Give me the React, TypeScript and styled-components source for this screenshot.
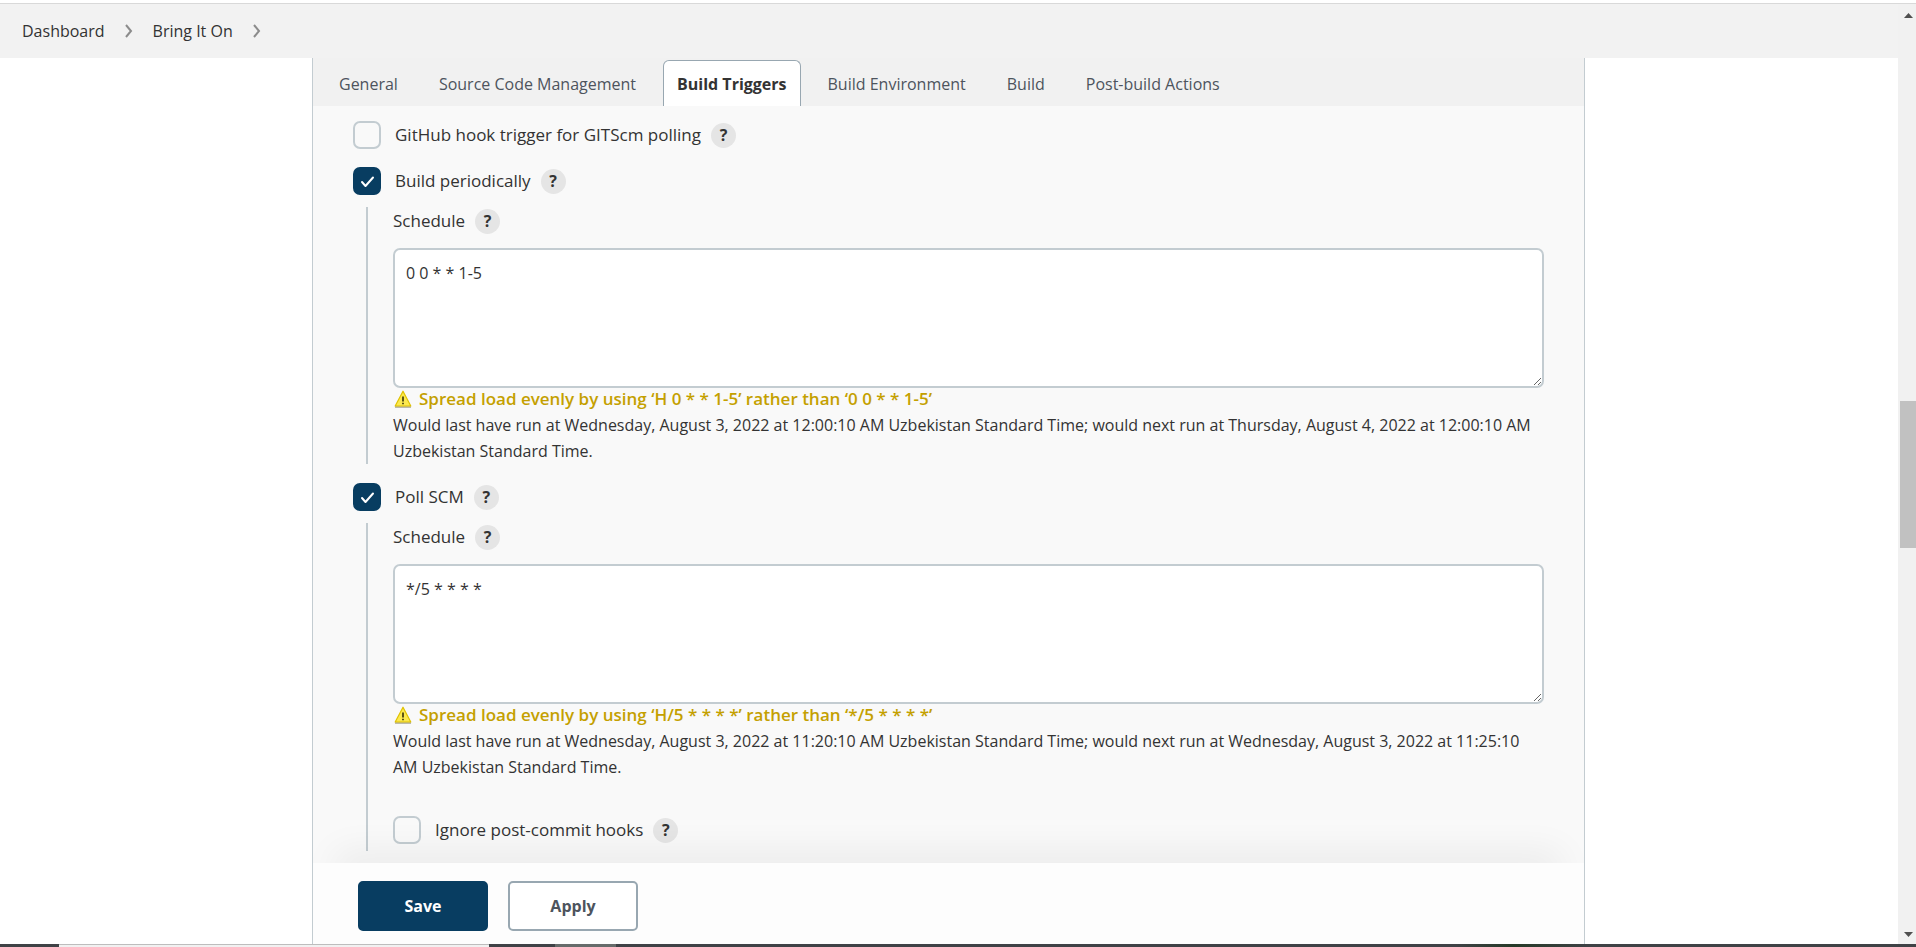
import React, { useId } from "react";
import styled, { createGlobalStyle } from "styled-components";

const font = `"Open Sans", "Noto Sans", sans-serif`;

const GlobalStyle = createGlobalStyle`
  *, *::before, *::after { box-sizing: border-box; }
  html, body, #root { height: 100%; }
  body { margin: 0; background: #fff; color: #333; font-family: ${font}; font-size: 16px; line-height: 26px; overflow: hidden; }
  button, textarea, input { font: inherit; color: inherit; }
`;

const Page = styled.div`
  display: grid;
  grid-template: auto minmax(0, 1fr) auto / minmax(0, 1fr) 18px;
  height: 100vh;
`;

const TopEdge = styled.div`
  grid-column: 1 / -1;
  height: 4px;
  border-bottom: 1px solid #d9d9d9;
`;

const Main = styled.div`
  display: flex;
  flex-direction: column;
  min-height: 0;
`;

const Breadcrumbs = styled.nav`
  display: flex;
  flex: none;
  align-items: center;
  height: 54px;
  padding: 0 22px;
  background: #f2f2f2;
`;

const Crumb = styled.a`
  color: #333;
  font-size: 16px;
  font-weight: 500;
  text-decoration: none;
`;

const CrumbArrow = styled.svg`
  flex: none;
  width: 8px;
  height: 14px;
  margin: 0 20px;
  fill: none;
  stroke: #8c8c8c;
  stroke-width: 2;
`;

const Panel = styled.main`
  display: flex;
  flex: 1;
  flex-direction: column;
  min-height: 0;
  margin: 0 313px 0 312px;
  border: solid #c3ccd1;
  border-width: 0 1px;
  background: #f9f9f9;
  overflow: hidden;
`;

const TabBar = styled.nav`
  display: flex;
  flex: none;
  align-items: flex-end;
  gap: 13px;
  height: 48px;
  padding: 0 12px;
  background: #f1f1f1;
`;

const Tab = styled.a<{ $active?: boolean }>`
  height: 46px;
  padding: 0 13px;
  border: 1px solid ${(p) => (p.$active ? "#98a7b1" : "transparent")};
  border-bottom: 0;
  border-radius: 6px 6px 0 0;
  background: ${(p) => (p.$active ? "#fff" : "transparent")};
  color: ${(p) => (p.$active ? "#333" : "#4d545d")};
  font-weight: ${(p) => (p.$active ? 700 : 400)};
  line-height: 46px;
  text-decoration: none;
  white-space: nowrap;
`;

const Form = styled.form`
  display: flex;
  flex: 1;
  flex-direction: column;
  min-height: 0;
`;

const Options = styled.div`
  flex: 1;
  min-height: 0;
  padding: 15px 40px 0;
  overflow: hidden;
`;

const OptionRow = styled.div`
  display: flex;
  align-items: center;
  height: 28px;
`;

const CheckInput = styled.input`
  flex: none;
  appearance: none;
  width: 28px;
  height: 28px;
  margin: 0 14px 0 0;
  border: 2px solid #c3ccd1;
  border-radius: 7px;
  background: #f9f9f9;

  &:checked { border-color: #083d61; background: #083d61; }
`;

const CheckBox = styled.span`
  display: grid;
  height: 28px;
  > * { grid-area: 1 / 1; }
`;

const CheckMark = styled.svg`
  width: 28px;
  height: 28px;
  fill: none;
  stroke: #fff;
  stroke-width: 2;
  stroke-linecap: round;
  stroke-linejoin: round;
  pointer-events: none;
`;

const Label = styled.label`
  font-size: 17px;
  font-weight: 500;
`;

const HelpButton = styled.button`
  flex: none;
  width: 25px;
  height: 25px;
  margin-left: 10px;
  padding: 0;
  border: 0;
  border-radius: 50%;
  background: #e5e5e5;
  font-size: 16px;
  font-weight: 700;
  line-height: 25px;
`;

const Nested = styled.div`
  margin: 12px 0 19px 13px;
  padding-left: 25px;
  border-left: 2px solid #c3ccd1;
`;

const Spacer = styled.div`
  height: 18px;
`;

const Schedule = styled.textarea`
  display: block;
  width: 100%;
  height: 140px;
  margin-top: 13px;
  padding: 10px 11px;
  border: 2px solid #c3ccd1;
  border-radius: 7px;
  background: #fff;
  outline: 0;
  resize: vertical;
`;

const Warning = styled.div`
  display: flex;
  align-items: center;
  gap: 7px;
  height: 22px;
  margin-bottom: 2px;
  padding-left: 1px;
  color: #c4a000;
  font-size: 17px;
  font-weight: 600;
`;

const WarningIcon = styled.svg`
  flex: none;
  width: 18px;
  height: 18px;
`;

const RunTimes = styled.p`
  margin: 0;
`;

const Ignored = styled.div`
  padding: 36px 0 7px;
`;

const Footer = styled.div`
  display: flex;
  flex: none;
  gap: 20px;
  height: 81px;
  padding: 18px 45px;
  background: #fdfdfd;
  box-shadow: 0 -34px 36px -22px rgba(0, 0, 0, 0.06);
`;

const Action = styled.button<{ $primary?: boolean }>`
  width: 130px;
  height: 50px;
  padding: 0;
  border: 2px solid ${(p) => (p.$primary ? "#083d61" : "#98a7b1")};
  border-radius: 5px;
  background: ${(p) => (p.$primary ? "#083d61" : "#fff")};
  color: ${(p) => (p.$primary ? "#fff" : "#4d545d")};
  font-weight: 700;
`;

const Scrollbar = styled.div`
  display: flex;
  flex-direction: column;
  align-items: center;
  padding: 9px 0 7px 2px;
  background: #f1f1f1;
`;

const ScrollArrow = styled.svg`
  flex: none;
  width: 9px;
  height: 5px;
  fill: #505050;
`;

const ScrollTrack = styled.div`
  display: flex;
  flex: 1;
  flex-direction: column;
  width: 16px;
`;

const Thumb = styled.div`
  flex: 147;
  background: #c1c1c1;
`;

const ScrollGap = styled.div<{ $share: number }>`
  flex: ${(p) => p.$share};
`;

const BottomEdge = styled.div`
  display: flex;
  grid-column: 1 / -1;
  height: 3px;
  background: linear-gradient(90deg, #3f4246 76%, #263a28 79%, #3f4246 83%);
`;

const EdgeStart = styled.div`
  width: 59px;
`;

const StatusEdge = styled.div`
  width: 430px;
  border-top: 1px solid #bdbdbd;
  background: #f1f1f1;
`;

const TaskEdge = styled.div`
  width: 61px;
  margin-left: 66px;
  background: #666b6a;
`;

const tabs = ["General", "Source Code Management", "Build Triggers", "Build Environment", "Build", "Post-build Actions"];

function Help({ topic }: { topic: string }) {
  return <HelpButton type="button" aria-label={`Help for ${topic}`}>?</HelpButton>;
}

function Option({ label, checked = false }: { label: string; checked?: boolean }) {
  const id = useId();
  return (
    <OptionRow>
      <CheckBox>
        <CheckInput id={id} type="checkbox" defaultChecked={checked} />
        {checked && (
          <CheckMark viewBox="0 0 28 28" aria-hidden="true">
            <path d="M9 15l3.500 4L20 10.500" />
          </CheckMark>
        )}
      </CheckBox>
      <Label htmlFor={id}>{label}</Label>
      <Help topic={label} />
    </OptionRow>
  );
}

function ScheduleField({ value, warning, runs }: { value: string; warning: string; runs: string }) {
  const id = useId();
  return (
    <>
      <OptionRow>
        <Label htmlFor={id}>Schedule</Label>
        <Help topic="Schedule" />
      </OptionRow>
      <Schedule id={id} defaultValue={value} spellCheck={false} />
      <Warning>
        <WarningIcon viewBox="0 0 18 18" aria-hidden="true">
          <path d="M1 17h16" stroke="#a9a58c" strokeWidth="1.500" />
          <path d="M9 1.200 16.800 16H1.200Z" fill="#fce94f" stroke="#e0c200" strokeWidth="1.200" strokeLinejoin="round" />
          <path d="M9 6.500v5M9 12.800v1.400" stroke="#4a4410" strokeWidth="1.800" />
        </WarningIcon>
        <span>{warning}</span>
      </Warning>
      <RunTimes>{runs}</RunTimes>
    </>
  );
}

function Chevron() {
  return (
    <CrumbArrow viewBox="0 0 8 14" aria-hidden="true">
      <path d="M1 1l5 6-5 6" />
    </CrumbArrow>
  );
}

export default function App() {
  return (
    <>
      <GlobalStyle />
      <Page>
        <TopEdge />
        <Main>
          <Breadcrumbs aria-label="Breadcrumb">
            <Crumb href="#dashboard">Dashboard</Crumb>
            <Chevron />
            <Crumb href="#project">Bring It On</Crumb>
            <Chevron />
          </Breadcrumbs>
          <Panel>
            <TabBar aria-label="Sections">
              {tabs.map((tab) => (
                <Tab key={tab} href={`#${tab}`} $active={tab === "Build Triggers"}>{tab}</Tab>
              ))}
            </TabBar>
            <Form>
              <Options>
                <Option label="GitHub hook trigger for GITScm polling" />
                <Spacer />
                <Option label="Build periodically" checked />
                <Nested>
                  <ScheduleField
                    value="0 0 * * 1-5"
                    warning="Spread load evenly by using ‘H 0 * * 1-5’ rather than ‘0 0 * * 1-5’"
                    runs="Would last have run at Wednesday, August 3, 2022 at 12:00:10 AM Uzbekistan Standard Time; would next run at Thursday, August 4, 2022 at 12:00:10 AM Uzbekistan Standard Time."
                  />
                </Nested>
                <Option label="Poll SCM" checked />
                <Nested>
                  <ScheduleField
                    value="*/5 * * * *"
                    warning="Spread load evenly by using ‘H/5 * * * *’ rather than ‘*/5 * * * *’"
                    runs="Would last have run at Wednesday, August 3, 2022 at 11:20:10 AM Uzbekistan Standard Time; would next run at Wednesday, August 3, 2022 at 11:25:10 AM Uzbekistan Standard Time."
                  />
                  <Ignored>
                    <Option label="Ignore post-commit hooks" />
                  </Ignored>
                </Nested>
              </Options>
              <Footer>
                <Action type="submit" $primary>Save</Action>
                <Action type="button">Apply</Action>
              </Footer>
            </Form>
          </Panel>
        </Main>
        <Scrollbar aria-hidden="true">
          <ScrollArrow viewBox="0 0 9 5"><path d="M0 5 4.500 0 9 5Z" /></ScrollArrow>
          <ScrollTrack>
            <ScrollGap $share={383} />
            <Thumb />
            <ScrollGap $share={384} />
          </ScrollTrack>
          <ScrollArrow viewBox="0 0 9 5"><path d="M0 0h9L4.500 5Z" /></ScrollArrow>
        </Scrollbar>
        <BottomEdge>
          <EdgeStart />
          <StatusEdge />
          <TaskEdge />
        </BottomEdge>
      </Page>
    </>
  );
}
